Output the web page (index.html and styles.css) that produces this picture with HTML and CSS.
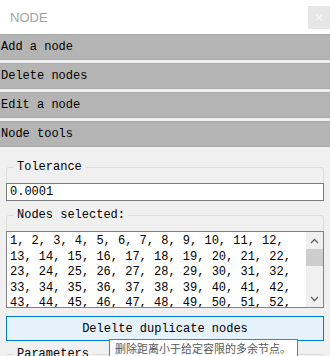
FILE: index.html
```html
<!DOCTYPE html>
<html lang="en">
<head>
  <meta charset="UTF-8">
  <title>NODE</title>
  <link rel="stylesheet" href="styles.css">
</head>
<body>
  <div class="titlebar">
    <span class="title">NODE</span>
    <span class="close">&times;</span>
  </div>

  <div class="sections">
    <div class="section">Add a node</div>
    <div class="section">Delete nodes</div>
    <div class="section">Edit a node</div>
    <div class="section">Node tools</div>
  </div>

  <div class="content">
    <fieldset class="group">
      <legend>Tolerance</legend>
      <input class="field" type="text" value="0.0001">
    </fieldset>

    <fieldset class="group">
      <legend>Nodes selected:</legend>
      <div class="listbox">
        <div class="list">1, 2, 3, 4, 5, 6, 7, 8, 9, 10, 11, 12, 13, 14, 15, 16, 17, 18, 19, 20, 21, 22, 23, 24, 25, 26, 27, 28, 29, 30, 31, 32, 33, 34, 35, 36, 37, 38, 39, 40, 41, 42, 43, 44, 45, 46, 47, 48, 49, 50, 51, 52, 53, 54, 55, 56, 57, 58, 59, 60, 61, 62, 63, 64, 65, 66, 67, 68, 69, 70</div>
        <div class="scrollbar">
          <span class="arrow">
            <svg width="9" height="6" viewBox="0 0 9 6"><polyline points="1,5 4.5,1.5 8,5" fill="none" stroke="#606060" stroke-width="1.3"/></svg>
          </span>
          <span class="thumb"></span>
          <span class="track"></span>
          <span class="arrow">
            <svg width="9" height="6" viewBox="0 0 9 6"><polyline points="1,1 4.5,4.5 8,1" fill="none" stroke="#606060" stroke-width="1.3"/></svg>
          </span>
        </div>
      </div>
    </fieldset>

    <button class="btn">Delelte duplicate nodes</button>

    <fieldset class="group">
      <legend>Parameters</legend>
    </fieldset>
  </div>

  <!-- tooltip del botón -->
  <div class="tooltip">删除距离小于给定容限的多余节点。</div>
</body>
</html>
```

FILE: styles.css
```css
/* Reset básico */
* {
  box-sizing: border-box;
  margin: 0;
  padding: 0;
}
body {
  font-family: 'Liberation Mono', 'DejaVu Sans Mono', monospace;
  font-size: 12px;
  background: #f0f0f0;
  color: #000;
  height: 356px;
  overflow: hidden;
}
.titlebar {
  display: flex;
  align-items: center;
  justify-content: space-between;
  height: 34px;
  background: #fff;
  padding-left: 10px;
}
.title {
  font-family: 'Liberation Sans', Arial, sans-serif;
  font-size: 13px;
  color: #a3a3a3;
}
.close {
  width: 22px;
  height: 23px;
  margin-top: 1px;
  background: #e6e6e6;
  color: #fafafa;
  font-family: 'Liberation Sans', Arial, sans-serif;
  font-size: 13px;
  line-height: 23px;
  text-align: center;
}
.sections {
  display: flex;
  flex-direction: column;
  gap: 3px;
}
.section {
  height: 26px;
  line-height: 24px;
  padding-left: 1px;
  background: #b4b4b4;
  border-top: 1px solid #aaa;
  border-bottom: 1px solid #aaa;
}
.content {
  padding: 12px 6px 0 6px;
}
.group {
  border: 1px solid #dcdcdc;
  border-bottom: none;
  border-radius: 3px 3px 0 0;
  padding: 0;
  margin: 0;
}
.group + .group {
  margin-top: 6px;
}
.group legend {
  margin-left: 7px;
  padding: 0 3px;
  line-height: 16px;
}
.field {
  display: block;
  width: calc(100% + 2px);
  height: 18px;
  margin: 8px 0 0 -1px;
  padding: 0 3px;
  border: 1px solid #7a7a7a;
  background: #fff;
  font-family: inherit;
  font-size: 12px;
  color: #000;
  outline: none;
}
.listbox {
  display: flex;
  width: calc(100% + 2px);
  height: 77px;
  margin: 8px 0 0 -1px;
  border: 1px solid #828282;
  background: #fff;
}
.list {
  flex: 1;
  overflow: hidden;
  padding: 2px 3px 0 3px;
  line-height: 15.6px;
}
.scrollbar {
  width: 17px;
  display: flex;
  flex-direction: column;
  background: #f0f0f0;
}
.arrow {
  height: 17px;
  display: flex;
  align-items: center;
  justify-content: center;
}
.thumb {
  height: 17px;
  background: #cdcdcd;
}
.track {
  flex: 1;
}
.btn {
  display: block;
  width: 100%;
  height: 25px;
  margin-top: 8px;
  background: #e5f1fb;
  border: 1px solid #0078d7;
  font-family: inherit;
  font-size: 12px;
  color: #000;
}
.btn + .group {
  margin-top: 5px;
}
.tooltip {
  position: absolute;
  left: 109px;
  top: 339px;
  width: 189px;
  height: 24px;
  padding: 1px 0 0 5px;
  background: #fff;
  border: 1px solid #767676;
  font-family: 'Noto Sans CJK SC', sans-serif;
  font-size: 11px;
  line-height: 15px;
  color: #575757;
}
```
